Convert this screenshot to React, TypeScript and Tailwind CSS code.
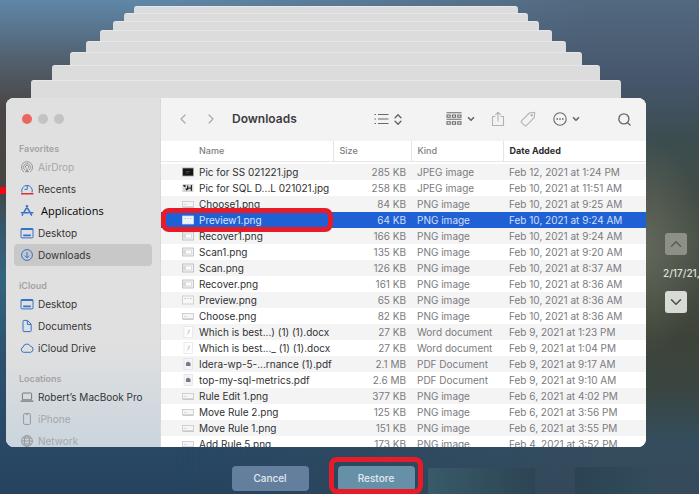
import type { ReactNode } from "react";
import {
  ChevronDown,
  ChevronLeft,
  ChevronRight,
  ChevronUp,
  ChevronsUpDown,
  Search,
} from "lucide-react";

type IconName =
  | "airdrop"
  | "clock"
  | "apps"
  | "desktop"
  | "download"
  | "doc"
  | "cloud"
  | "laptop"
  | "phone"
  | "globe";

type Thumb = "dark" | "photo" | "bar" | "window" | "word" | "pdf" | "wide";

const SHEETS = [
  "mx-[128px] h-[7px]",
  "mx-[118px] h-[8px]",
  "mx-[107px] h-[9px]",
  "mx-[94px] h-[11px]",
  "mx-[80px] h-[11px]",
  "mx-[64px] h-[13px]",
  "mx-[46px] h-[15px]",
  "mx-[25px] h-[18px]",
];

const SECTIONS: { title: string; items: { label: string; icon: IconName; muted?: boolean; active?: boolean }[] }[] = [
  {
    title: "Favorites",
    items: [
      { label: "AirDrop", icon: "airdrop", muted: true },
      { label: "Recents", icon: "clock" },
      { label: "Applications", icon: "apps" },
      { label: "Desktop", icon: "desktop" },
      { label: "Downloads", icon: "download", active: true },
    ],
  },
  {
    title: "iCloud",
    items: [
      { label: "Desktop", icon: "desktop" },
      { label: "Documents", icon: "doc" },
      { label: "iCloud Drive", icon: "cloud" },
    ],
  },
  {
    title: "Locations",
    items: [
      { label: "Robert’s MacBook Pro", icon: "laptop" },
      { label: "iPhone", icon: "phone", muted: true },
      { label: "Network", icon: "globe", muted: true },
    ],
  },
];

const FILES: { name: string; size: string; kind: string; date: string; thumb: Thumb; selected?: boolean }[] = [
  { name: "Pic for SS 021221.jpg", size: "285 KB", kind: "JPEG image", date: "Feb 12, 2021 at 1:24 PM", thumb: "dark" },
  { name: "Pic for SQL D...L 021021.jpg", size: "258 KB", kind: "JPEG image", date: "Feb 10, 2021 at 11:51 AM", thumb: "photo" },
  { name: "Choose1.png", size: "84 KB", kind: "PNG image", date: "Feb 10, 2021 at 9:25 AM", thumb: "bar" },
  { name: "Preview1.png", size: "64 KB", kind: "PNG image", date: "Feb 10, 2021 at 9:24 AM", thumb: "wide", selected: true },
  { name: "Recover1.png", size: "166 KB", kind: "PNG image", date: "Feb 10, 2021 at 9:24 AM", thumb: "window" },
  { name: "Scan1.png", size: "135 KB", kind: "PNG image", date: "Feb 10, 2021 at 9:20 AM", thumb: "window" },
  { name: "Scan.png", size: "126 KB", kind: "PNG image", date: "Feb 10, 2021 at 8:37 AM", thumb: "window" },
  { name: "Recover.png", size: "161 KB", kind: "PNG image", date: "Feb 10, 2021 at 8:36 AM", thumb: "window" },
  { name: "Preview.png", size: "65 KB", kind: "PNG image", date: "Feb 10, 2021 at 8:36 AM", thumb: "wide" },
  { name: "Choose.png", size: "82 KB", kind: "PNG image", date: "Feb 10, 2021 at 8:36 AM", thumb: "bar" },
  { name: "Which is best...) (1) (1).docx", size: "27 KB", kind: "Word document", date: "Feb 9, 2021 at 1:23 PM", thumb: "word" },
  { name: "Which is best..._ (1) (1).docx", size: "27 KB", kind: "Word document", date: "Feb 9, 2021 at 1:04 PM", thumb: "word" },
  { name: "Idera-wp-5-...rnance (1).pdf", size: "2.1 MB", kind: "PDF Document", date: "Feb 9, 2021 at 9:17 AM", thumb: "pdf" },
  { name: "top-my-sql-metrics.pdf", size: "2.6 MB", kind: "PDF Document", date: "Feb 9, 2021 at 9:10 AM", thumb: "pdf" },
  { name: "Rule Edit 1.png", size: "377 KB", kind: "PNG image", date: "Feb 6, 2021 at 4:02 PM", thumb: "bar" },
  { name: "Move Rule 2.png", size: "125 KB", kind: "PNG image", date: "Feb 6, 2021 at 3:56 PM", thumb: "bar" },
  { name: "Move Rule 1.png", size: "151 KB", kind: "PNG image", date: "Feb 6, 2021 at 3:55 PM", thumb: "bar" },
  { name: "Add Rule 5.png", size: "173 KB", kind: "PNG image", date: "Feb 4, 2021 at 3:52 PM", thumb: "bar" },
];

const ICONS: Record<IconName, ReactNode> = {
  airdrop: (
    <>
      <path d="M4 12A5.6 5.6 0 1 1 10 12" />
      <path d="M4.6 10A3.6 3.6 0 1 1 9.4 10" />
      <path d="M5.8 8.3A1.7 1.7 0 1 1 8.2 8.3" />
      <path d="M7 8 4.8 12.2h4.4z" fill="currentColor" stroke="none" />
    </>
  ),
  clock: (
    <>
      <path d="M2 10.5A5.3 5.3 0 1 1 12 10.5" />
      <path d="M7.2 4v3.4H4.4" />
      <path d="M1 11.8h12.5" stroke="#dc2e3c" strokeWidth="1.6" />
    </>
  ),
  apps: (
    <g strokeWidth="1.5" strokeLinecap="round">
      <path d="M7.6 1.8 3.6 8.8M6.3 1.8l5.2 9.4M1.4 8.7h7M10.6 8.7h2.2M2.8 10.400l-.5.8" />
    </g>
  ),
  desktop: (
    <>
      <rect x="1" y="2.5" width="12" height="9.4" rx="1" />
      <path d="M1 3.3h12" strokeWidth="1.4" />
      <path d="M3.2 9.4h7.6" strokeWidth="1.8" />
    </>
  ),
  download: (
    <>
      <circle cx="7" cy="7" r="5.4" />
      <path d="M7 4v5.6M4.8 7.6 7 9.8l2.2-2.2" />
    </>
  ),
  doc: (
    <path d="M3 2.2c0-.5.3-.8.8-.8h3.7l3.7 3.8v6.6c0 .5-.3.8-.8.8H3.8c-.5 0-.8-.3-.8-.8zM7.4 1.6v3.8h3.7" />
  ),
  cloud: (
    <path d="M3.6 11.300a2.700 2.700 0 0 1-.5-5.200A3.900 3.900 0 0 1 10.400 5.200a3.100 3.100 0 0 1 .2 6.100z" />
  ),
  laptop: (
    <>
      <rect x="2.4" y="3" width="9.2" height="6.8" rx=".6" />
      <path d="M.6 11.2h12.8" strokeWidth="1.2" />
    </>
  ),
  phone: (
    <>
      <rect x="3.6" y="1.6" width="6.8" height="10.8" rx="1" />
      <path d="M6 2.4h2" />
    </>
  ),
  globe: (
    <>
      <circle cx="7" cy="7" r="5.4" />
      <ellipse cx="7" cy="7" rx="2.6" ry="5.4" />
      <path d="M1.6 7h10.8M2.6 4h8.8M2.6 10h8.8" />
    </>
  ),
};

function SideIcon({ name }: { name: IconName }) {
  return (
    <svg viewBox="0 0 14 14" className="size-3.5 shrink-0" fill="none" stroke="currentColor" strokeWidth="1" aria-hidden="true">
      {ICONS[name]}
    </svg>
  );
}

function FileIcon({ thumb, selected }: { thumb: Thumb; selected?: boolean }) {
  return (
    <svg viewBox="0 0 12 12" className="size-3 shrink-0" fill="none" aria-hidden="true">
      {thumb === "dark" && (
        <>
          <rect x=".5" y="2" width="11" height="8" fill="#151517" stroke="#a8a8aa" strokeWidth=".8" />
          <path d="M4 5.5h4M4 7h3" stroke="#55555a" strokeWidth=".7" />
        </>
      )}
      {thumb === "photo" && (
        <>
          <rect x=".5" y="2" width="11" height="8" fill="#d6d6d8" />
          <path d="M1 3h2.500v2H2zM5 3.500h1.200v4.500H5zM8.800 3H10v6H8.800zM6 5.500h3v1.200H6zM3.500 6 5 6.500v2H4z" fill="#2b2b2d" />
        </>
      )}
      {thumb === "bar" && (
        <>
          <rect x=".5" y="3.500" width="11" height="5.500" fill="#f5f5f6" stroke="#c2c2c6" strokeWidth=".7" />
          <path d="M1 9.200h10.500" stroke="#adadb2" strokeWidth=".7" />
          <path d="M2.500 6.500h2" stroke="#c4c4c8" strokeWidth=".7" />
        </>
      )}
      {thumb === "wide" && (
        <>
          <rect x=".5" y="2" width="11" height="8" fill={selected ? "#eef3fc" : "#f7f7f8"} stroke={selected ? "#d5e2f8" : "#c2c2c6"} strokeWidth=".7" />
          <path d="M2.500 4.500h1.500M5.500 4.500h1M8 4.500h1.500" stroke="#aeb1b8" strokeWidth=".8" />
        </>
      )}
      {thumb === "window" && (
        <>
          <rect x=".5" y="2" width="11" height="8" fill="#f2f2f3" stroke="#b9b9be" strokeWidth=".8" />
          <rect x="3.500" y="4" width="6" height="4" fill="#fff" stroke="#c6c6ca" strokeWidth=".6" />
          <path d="M2 4v4.500" stroke="#b4b4ba" strokeWidth=".8" />
        </>
      )}
      {thumb === "word" && (
        <>
          <rect x="2" y=".5" width="8.500" height="11" fill="#fff" stroke="#dededf" strokeWidth=".6" />
          <path d="M7.500 3.500 6.500 7 5 8.500M5 4.500l.5.8" stroke="#b0b0b4" strokeWidth=".8" />
        </>
      )}
      {thumb === "pdf" && (
        <>
          <rect x="2" y=".5" width="8.500" height="11" fill="#f4f4f6" stroke="#dcdce0" strokeWidth=".6" />
          <path d="M4 8V5l2-1.500L8.500 5v3z" fill="#7a7a86" />
        </>
      )}
    </svg>
  );
}

function Sidebar() {
  return (
    <nav className="w-[155px] shrink-0 border-r border-[#d8d8da] bg-linear-to-b from-[#e1e0e0] from-70% to-[#c9d5dd] px-2">
      <div className="flex h-[43px] items-center gap-1.5 pb-px pl-2">
        <button aria-label="Close" className="size-2.5 rounded-full bg-[#ec6661]" />
        <button aria-label="Minimize" className="size-2.5 rounded-full bg-[#c4c3c3]" />
        <button aria-label="Zoom" className="size-2.5 rounded-full bg-[#c4c3c3]" />
      </div>
      {SECTIONS.map((section) => (
        <section key={section.title} className="mb-3">
          <h2 className="pl-[5px] text-[9px] leading-[15px] font-semibold text-[#a3a2a4]">{section.title}</h2>
          {section.items.map((item) => (
            <a
              key={item.label}
              href="#"
              className={`flex h-[22px] items-center gap-1 rounded-[4px] pl-1.5 text-[10px] whitespace-nowrap ${
                item.active ? "bg-[#c8c8c8]" : ""
              } ${item.muted ? "text-[#a6a6a8]" : "text-[#343436]"}`}
            >
              <span className={item.muted ? "text-[#98989a]" : item.icon === "laptop" ? "text-[#77787c]" : "text-[#3272c8]"}>
                <SideIcon name={item.icon} />
              </span>
              {item.icon === "apps" ? (
                <span className="pl-[3px] font-['Open_Sans',sans-serif] text-[11px] text-black">{item.label}</span>
              ) : (
                item.label
              )}
            </a>
          ))}
        </section>
      ))}
    </nav>
  );
}

function Toolbar() {
  return (
    <header className="flex h-[43px] items-center bg-[#f4f3f4] pr-3.5 pb-px pl-3.5 text-[#69696b]">
      <button aria-label="Back" className="text-[#a9a9ab]">
        <ChevronLeft className="h-5 w-4" strokeWidth={1.8} />
      </button>
      <button aria-label="Forward" className="ml-3 text-[#a9a9ab]">
        <ChevronRight className="h-5 w-4" strokeWidth={1.8} />
      </button>
      <h1 className="ml-[13px] text-[12px] font-semibold text-[#3c3c3e]">Downloads</h1>
      <button aria-label="View as list" className="ml-auto flex items-center gap-0.5">
        <svg viewBox="0 0 15 12" className="h-3 w-[15px]" stroke="currentColor" strokeWidth="1.2" aria-hidden="true">
          <path d="M.5 1.500h1.500M.5 6h1.500M.5 10.500h1.500M4 1.500h10.500M4 6h10.500M4 10.500h10.500" />
        </svg>
        <ChevronsUpDown className="h-[15px] w-3.5" strokeWidth={2.6} />
      </button>
      <button aria-label="Group items" className="ml-[41px] flex items-center gap-1">
        <svg viewBox="0 0 16 14" className="h-3.5 w-4" fill="none" stroke="currentColor" strokeWidth="1.1" aria-hidden="true">
          <path d="M.5.8h15M.5 7.300h15" />
          <path d="M1 3h3.200v2.300H1zM6.400 3h3.200v2.300H6.400zM11.800 3h3.200v2.300h-3.200zM1 9.700h3.200v2.500H1zM6.400 9.700h3.200v2.500H6.400zM11.800 9.700h3.200v2.500h-3.200z" />
        </svg>
        <ChevronDown className="size-2.5" strokeWidth={4} />
      </button>
      <button aria-label="Share" className="ml-[15px] text-[#b3b3b5]">
        <svg viewBox="0 0 14 16" className="h-4 w-3.5" fill="none" stroke="currentColor" strokeWidth="1.1" aria-hidden="true">
          <path d="M4.500 5.500H1.500v9h11v-9H9.500M7 10.500V1.200M4.300 3.800 7 1.200l2.700 2.600" />
        </svg>
      </button>
      <button aria-label="Edit tags" className="ml-[15px] text-[#b3b3b5]">
        <svg viewBox="0 0 16 16" className="size-4" fill="none" stroke="currentColor" strokeWidth="1.1" strokeLinejoin="round" aria-hidden="true">
          <path d="M1.300 10.100 9.300 2l4.700-.6c.4 0 .7.300.7.700L14.200 6.600l-8.100 8.200c-.4.300-.8.300-1.100 0L1.300 11.200c-.3-.3-.3-.7 0-1.100z" />
          <circle cx="11.700" cy="4.300" r=".7" />
        </svg>
      </button>
      <button aria-label="More actions" className="ml-[17px] flex items-center gap-1">
        <svg viewBox="0 0 14 14" className="size-3.5" fill="none" stroke="currentColor" strokeWidth="1.100" aria-hidden="true">
          <circle cx="7" cy="7" r="6.200" />
          <path d="M3.400 7h1.600M6.200 7h1.600M9 7h1.600" strokeWidth="1.600" />
        </svg>
        <ChevronDown className="size-2.5" strokeWidth={4} />
      </button>
      <button aria-label="Search" className="ml-9">
        <Search className="size-[15px]" strokeWidth={2.2} />
      </button>
    </header>
  );
}

function FileTable() {
  return (
    <table className="w-full table-fixed border-collapse text-left text-[10px] leading-4 whitespace-nowrap">
      <colgroup>
        <col className="w-[172px]" />
        <col className="w-[78px]" />
        <col className="w-[92px]" />
        <col />
      </colgroup>
      <thead className="border-b border-[#e6e6e7] text-[9px] text-[#7e7e80]">
        <tr className="h-5">
          <th className="p-0 pl-[38px] font-medium">Name</th>
          <th className="border-l border-[#e3e3e4] p-0 pl-1.5 font-medium">Size</th>
          <th className="border-l border-[#e3e3e4] p-0 pl-1.5 font-medium">Kind</th>
          <th className="border-l border-[#e3e3e4] p-0 pl-1.5 font-bold text-[#2c2c2e]">Date Added</th>
        </tr>
      </thead>
      <tbody>
        <tr className="h-[3px]" aria-hidden="true">
          <td colSpan={4} className="p-0" />
        </tr>
        {FILES.map((file, i) => {
          const tone = file.selected ? "text-[#cfdffa]" : "text-[#7b7b7d]";
          return (
            <tr
              key={file.name}
              aria-selected={file.selected}
              className={`h-4 ${file.selected ? "bg-[#1f61d4]" : i % 2 === 0 ? "bg-[#f4f4f5]" : "bg-white"}`}
            >
              <td className={`relative p-0 pl-[21px] ${file.selected ? "text-[#dbe7fc]" : "text-[#303032]"}`}>
                <div className="flex h-4 items-center gap-[5px]">
                  <FileIcon thumb={file.thumb} selected={file.selected} />
                  {file.name}
                </div>
                {file.selected && (
                  <span className="absolute -inset-y-1 right-0 left-0 z-10 rounded-[8px] border-5 border-[#e81c28]" />
                )}
              </td>
              <td className={`p-0 pr-[5px] text-right ${tone}`}>{file.size}</td>
              <td className={`p-0 pl-1.5 ${tone}`}>{file.kind}</td>
              <td className={`p-0 pl-1.5 ${tone}`}>{file.date}</td>
            </tr>
          );
        })}
      </tbody>
    </table>
  );
}

export default function App() {
  return (
    <div className="relative flex h-screen overflow-hidden bg-[linear-gradient(to_bottom,#5f87a8_0%,#52606f_12%,#4b4645_22%,#464542_38%,#35586a_46%,#33647f_56%,#2c5270_72%,#26435f_100%)] font-['Inter','Liberation_Sans',sans-serif]">
      <div className="absolute inset-0 bg-[linear-gradient(to_bottom,#52697f_0%,#46566c_16%,#3b4d50_28%,#434c45_40%,#4b5248_50%,#3d4338_68%,#3a4540_78%,#344d5e_90%,#35495a_100%)] mask-[linear-gradient(to_right,transparent_25%,black_85%)]" />
      <div className="absolute inset-0 bg-[radial-gradient(ellipse_60px_110px_at_92%_50%,#74766899,transparent)]" />
      <span className="absolute top-[187px] left-0 h-[7px] w-1.5 bg-[#f00812]" />

      <main className="relative flex min-w-0 flex-1 flex-col pt-1.5 pl-1.5">
        {SHEETS.map((sheet) => (
          <div key={sheet} className={`shrink-0 rounded-t-[3px] border-t border-[#e6e7ea] bg-[#dcdcdc] ${sheet}`} />
        ))}

        <div className="flex min-h-0 flex-1 overflow-hidden rounded-[8px] bg-white">
          <Sidebar />
          <div className="min-w-0 flex-1">
            <Toolbar />
            <FileTable />
          </div>
        </div>

        <footer className="relative flex h-[47px] shrink-0 items-start justify-center gap-[29px] pt-[19px] pr-1.5">
          <span className="absolute right-[111px] bottom-0 h-[26px] w-[107px] bg-linear-to-r from-[#385a69] to-[#2d4453]" />
          <span className="absolute -right-2 bottom-0 h-[27px] w-[79px] bg-linear-to-r from-[#2b4352] to-[#324c5c]" />
          <button className="h-[25px] w-[77px] rounded-[4px] bg-[#637f9d] text-[10px] font-medium text-[#e2eaf1]">Cancel</button>
          <div className="relative flex">
            <button className="h-[25px] w-[77px] rounded-[4px] bg-[#6690a7] text-[10px] font-medium text-[#e2eaf1]">Restore</button>
            <span className="absolute -top-[9px] -right-2 -left-[9px] h-[37px] rounded-[8px] border-5 border-[#e81c28]" />
          </div>
        </footer>
      </main>

      <aside className="relative flex w-[53px] shrink-0 flex-col pt-[233px] pl-[19px]">
        <button aria-label="Earlier snapshot" className="flex size-[22px] items-center justify-center rounded-[3px] bg-[#8d9087] text-[#585d54]">
          <ChevronUp className="size-[18px]" />
        </button>
        <time className="-ml-0.5 py-2.5 text-[10px] leading-4 font-medium whitespace-nowrap text-[#dfe2dc]">2/17/21,</time>
        <button aria-label="Later snapshot" className="flex size-[22px] items-center justify-center rounded-[3px] bg-[#d8dbd5] text-[#474c44]">
          <ChevronDown className="size-[18px]" />
        </button>
      </aside>
    </div>
  );
}
